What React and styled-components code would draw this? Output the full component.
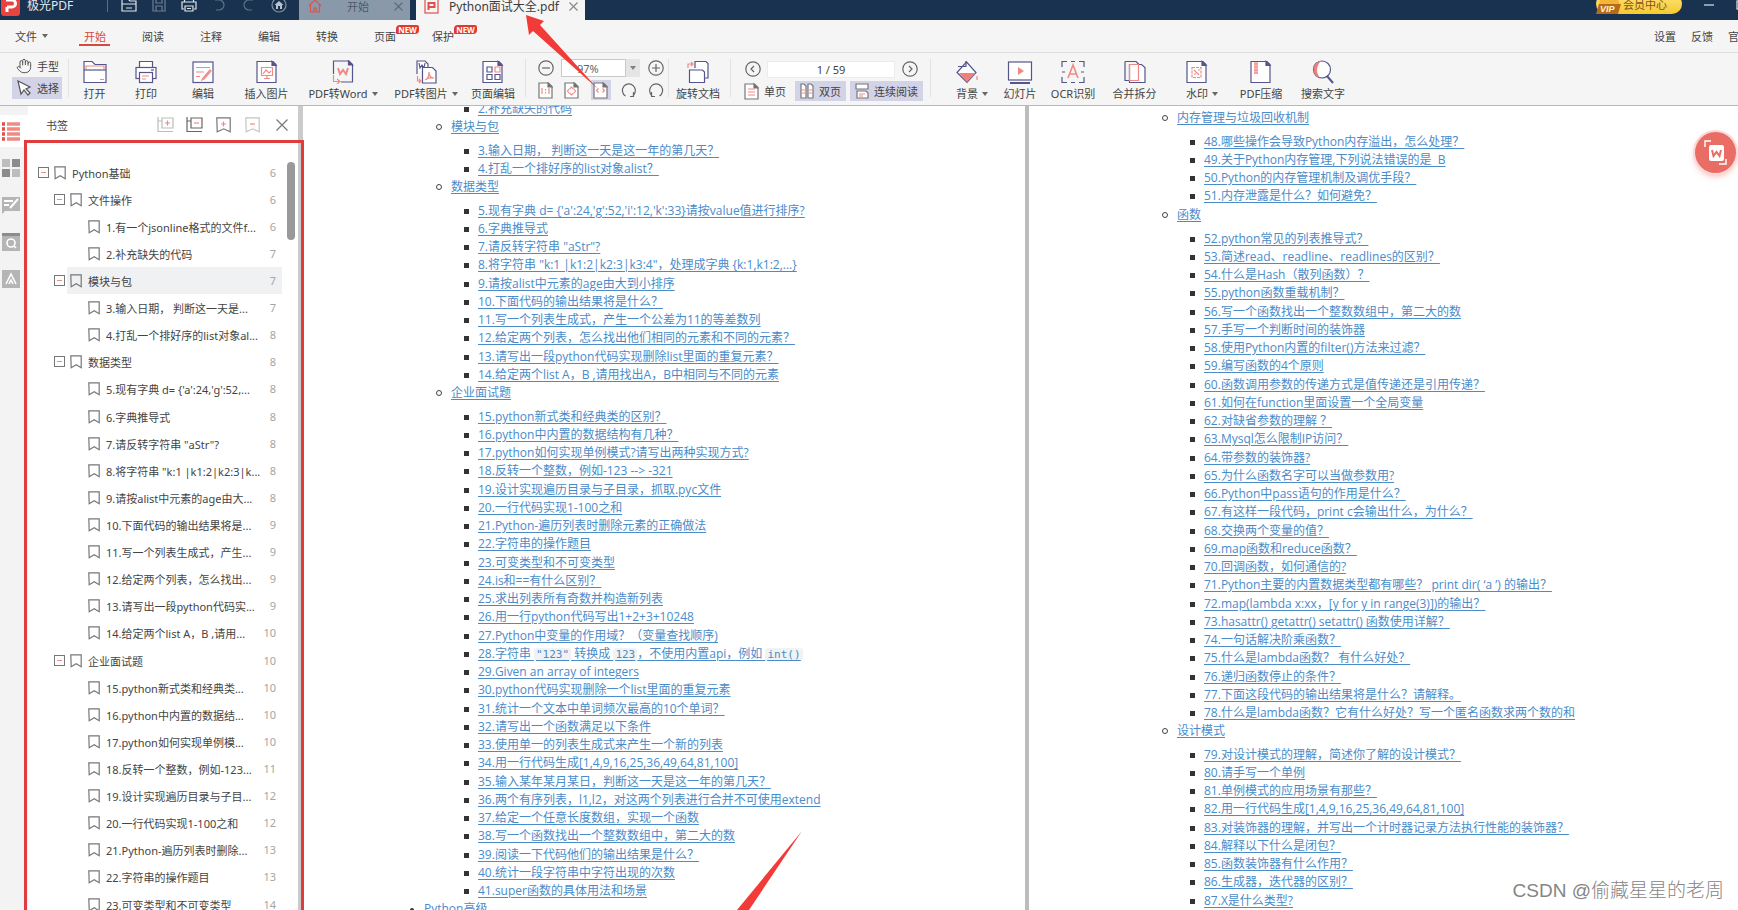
import { useState } from 'react';
import styled, { createGlobalStyle, css } from 'styled-components';
import { Hand } from 'lucide-react';

const UI_FONT = '"Noto Sans", "Noto Sans CJK SC", sans-serif';
const DOC_FONT = '"Open Sans", "Noto Sans CJK SC", sans-serif';

const colors = {
  navy: '#19324f',
  red: '#d9483f',
  pink: '#f08a85',
  indigo: '#55558c',
  bar: '#f5f5f5',
  active: '#d3d3e8',
  text: '#444444',
  gray: '#8a8a8a',
  link: '#4a8bc9',
  mark: '#f23b38'
};

const GlobalStyle = createGlobalStyle`
  *, *::before, *::after { box-sizing: border-box; }
  body { margin: 0; font-family: ${UI_FONT}; font-size: 11px; color: ${colors.text}; }
  button, input { font: inherit; color: inherit; margin: 0; padding: 0; }
  button { background: none; border: 0; cursor: pointer; white-space: nowrap; }
  ul { list-style: none; margin: 0; padding: 0; }
  svg { display: block; flex: none; }
`;

const Window = styled.div`
  position: relative;
  display: flex;
  flex-direction: column;
  height: 100vh;
  overflow: hidden;
  background: #fff;
`;

/* ---------- title bar ---------- */

const TitleBar = styled.header`
  display: flex;
  align-items: flex-end;
  flex: none;
  height: 20px;
  overflow: hidden;
  background: ${colors.navy};
`;

const Brand = styled.div`
  display: flex;
  align-items: center;
  gap: 7px;
  width: 107px;
  height: 30px;
  padding-left: 1px;
  font-size: 12px;
  color: #e4e9ef;
`;

const QuickBar = styled.div`
  display: flex;
  align-items: center;
  gap: 14px;
  width: 191px;
  height: 30px;
  padding-left: 13px;
`;

const QuickRule = styled.span`
  width: 1px;
  height: 30px;
  border-bottom: 8px solid ${colors.navy};
  background: #5d6f85;
`;

const DocTab = styled.div`
  display: flex;
  align-items: center;
  justify-content: space-between;
  height: 28px;
  width: ${p => (p.$active ? 169 : 111)}px;
  margin-right: 6px;
  padding: 0 7px 0 ${p => (p.$active ? 8 : 9)}px;
  background: ${p => (p.$active ? colors.bar : '#8a99aa')};
  color: ${p => (p.$active ? '#3c3c3c' : '#4d5a69')};
  font-size: ${p => (p.$active ? 12 : 11)}px;
`;

const WindowTools = styled.div`
  display: flex;
  align-items: center;
  height: 30px;
  margin-left: auto;
  margin-right: -8px;
  gap: 22px;
`;

const VipButton = styled.button`
  display: flex;
  align-items: center;
  gap: 2px;
  width: 86px;
  height: 20px;
  margin-bottom: 2px;
  border-radius: 10px;
  background: linear-gradient(#ffe37a, #f6c92f);
  color: #83501a;
`;

/* ---------- menu ---------- */

const MenuBar = styled.nav`
  display: flex;
  align-items: stretch;
  flex: none;
  height: 33px;
  overflow: hidden;
  background: ${colors.bar};
  border-bottom: 1px solid #dedede;
`;

const FileMenu = styled.button`
  display: flex;
  align-items: center;
  gap: 5px;
  width: 66px;
  padding-left: 15px;
`;

const MenuTab = styled.button`
  position: relative;
  display: flex;
  align-items: center;
  justify-content: center;
  width: 58px;
  color: ${p => (p.$active ? colors.red : colors.text)};

  ${p => p.$active && css`
    &::after {
      content: '';
      position: absolute;
      left: 13px;
      right: 14px;
      bottom: 6px;
      height: 2px;
      background: ${colors.red};
    }
  `}
`;

const NewTag = styled.span`
  position: absolute;
  left: 40px;
  top: 5px;
  width: 23px;
  border-radius: 4px 2px 4px 1px;
  background: #e03a2e;
  color: #fff;
  font-size: 8px;
  font-weight: 700;
  line-height: 9px;
  text-align: center;
`;

const MenuRight = styled.div`
  display: flex;
  gap: 15px;
  margin-left: auto;
  margin-right: -12px;
`;

/* ---------- ribbon ---------- */

const Ribbon = styled.div`
  display: flex;
  flex: none;
  height: 53px;
  padding-left: 12px;
  background: ${colors.bar};
  border-bottom: 1px solid #b9b9b9;
`;

const Divider = styled.span`
  flex: none;
  width: 1px;
  height: 38px;
  margin: 6px ${p => p.$after || 0}px 0 ${p => p.$before || 0}px;
  background: #e2e2e2;
`;

const Stack = styled.div`
  display: flex;
  flex-direction: column;
  flex: none;
  gap: ${p => p.$gap || 0}px;
  width: ${p => p.$w}px;
  padding-top: ${p => p.$top || 0}px;
`;

const Line = styled.div`
  display: flex;
  align-items: center;
  justify-content: ${p => p.$justify || 'flex-start'};
  gap: ${p => p.$gap || 0}px;
  height: 18px;
  padding-left: ${p => p.$left || 0}px;
`;

const ModeButton = styled.button`
  display: flex;
  align-items: center;
  gap: 5px;
  height: ${p => p.$h || 22}px;
  padding: 0 ${p => p.$pad || 4}px;
  background: ${p => (p.$active ? colors.active : 'transparent')};
`;

const BigButton = styled.button`
  display: flex;
  flex-direction: column;
  align-items: center;
  flex: none;
  gap: 3px;
  width: ${p => p.$w}px;
  padding-top: 7px;
`;

const BigLabel = styled.span`
  display: flex;
  align-items: center;
  gap: 4px;
  line-height: 14px;
  margin-right: ${p => (p.$hang ? -10 : 0)}px;
`;

const Caret = styled.i`
  border: 3px solid transparent;
  border-top: 4px solid #666;
  border-bottom: 0;
`;

const IconButton = styled.button`
  display: flex;
  align-items: center;
  justify-content: center;
  width: ${p => (p.$active ? 20 : 15)}px;
  height: ${p => (p.$active ? 20 : 18)}px;
  background: ${p => (p.$active ? colors.active : 'transparent')};
`;

const ZoomInput = styled.input`
  width: 65px;
  height: 18px;
  padding-left: 15px;
  border: 1px solid #c9c9c9;
  background: #fff;
  color: #666;
`;

const ZoomDrop = styled.button`
  display: flex;
  align-items: center;
  justify-content: center;
  width: 14px;
  height: 18px;
  margin-right: 8px;
  background: #e2e2e2;
  opacity: .8;
`;

const PageInput = styled.input`
  width: 128px;
  height: 17px;
  border: 1px solid #ececec;
  background: #fff;
  text-align: center;
`;

/* ---------- body ---------- */

const Body = styled.div`
  display: flex;
  flex: 1;
  min-height: 0;
`;

const Rail = styled.div`
  display: flex;
  flex-direction: column;
  flex: none;
  gap: 5px;
  width: 28px;
  padding-top: 9px;
  background: #f3f3f3;
`;

const RailButton = styled.button`
  display: flex;
  align-items: center;
  height: 32px;
  padding-left: 1px;
  background: ${p => (p.$active ? '#fff' : 'transparent')};
`;

const Panel = styled.aside`
  display: flex;
  flex-direction: column;
  flex: none;
  width: 275px;
  border-right: 5px solid #cbcbcb;
  overflow: hidden;
`;

const PanelHead = styled.div`
  display: flex;
  align-items: center;
  flex: none;
  gap: 14px;
  height: 38px;
  padding: 0 9px 0 18px;

  & h2 {
    flex: 1;
    margin: 0;
    font-size: 11px;
    font-weight: 400;
  }
`;

const Tree = styled.ul`
  position: relative;
  flex: none;
  padding: 15px 16px 0 10px;
`;

const Scrollbar = styled.div`
  position: absolute;
  top: 18px;
  right: 3px;
  width: 8px;
  height: 78px;
  border-radius: 4px;
  background: #999;
`;

const Node = styled.li`
  display: flex;
  align-items: center;
  height: 27px;
  padding-left: ${p => [0, 16, 50][p.$level]}px;
  white-space: nowrap;
  ${p => p.$selected && css`background: linear-gradient(90deg, transparent 29px, #eff1f3 29px);`}

  &:nth-child(9n) {
    margin-bottom: 1px;
  }

  & span {
    flex: 1;
    padding-left: 6px;
  }

  & em {
    font-style: normal;
    color: #a5a5a5;
    padding-right: 6px;
  }
`;

const Toggle = styled.button`
  position: relative;
  width: 11px;
  height: 11px;
  margin-right: 5px;
  border: 1px solid #777;

  &::after {
    content: '';
    position: absolute;
    left: 2px;
    right: 2px;
    top: 4px;
    height: 1px;
    background: ${colors.pink};
  }
`;

const Viewer = styled.main`
  flex: 1;
  min-width: 0;
  overflow: hidden;
`;

/* the spread is a little wider than the viewport */
const Spread = styled.div`
  display: grid;
  grid-template-columns: minmax(0, 1fr) 4px minmax(0, 1fr);
  width: calc(100% + 13px);
  height: 100%;
`;

const Gutter = styled.div`
  background: #bcbcbc;
`;

const Page = styled.article`
  overflow: hidden;
  font-family: ${DOC_FONT};
  font-size: 12px;
  line-height: 18px;
  white-space: nowrap;

  & > ul {
    margin-top: ${p => p.$shift}px;
  }

  & a {
    color: ${colors.link};
    text-decoration: underline;
    text-underline-offset: 2px;
  }
`;

const Chapter = styled.li`
  height: 18px;
  padding-left: 121px;

  &::before {
    content: '';
    float: left;
    width: 4px;
    height: 4px;
    margin: 8px 0 0 -14px;
    border-radius: 50%;
    background: #333;
  }
`;

const Topic = styled.li`
  padding-left: 148px;

  &::before {
    content: '';
    float: left;
    width: 6px;
    height: 6px;
    margin: 6px 0 0 -15px;
    border: 1px solid #444;
    border-radius: 50%;
  }
`;

const PlainTopic = styled.li`
  &::before {
    display: none;
  }
`;

const Questions = styled.ul`
  padding-top: ${p => (p.$cut ? 0 : 6)}px;
`;

const Question = styled.li`
  height: 18px;
  padding-left: 27px;

  &::before {
    content: '';
    float: left;
    width: 5px;
    height: 5px;
    margin: 7px 0 0 -14px;
    background: #333;
  }

  &:nth-child(4n) {
    margin-bottom: 1px;
  }

  & code {
    padding: 0 2px;
    border-radius: 3px;
    background: #f1f2f3;
    font-family: "DejaVu Sans Mono", monospace;
    font-size: 11px;
    text-decoration: underline;
  }
`;

const FloatButton = styled.button`
  position: absolute;
  top: 132px;
  right: 2px;
  display: flex;
  align-items: center;
  justify-content: center;
  width: 41px;
  height: 41px;
  border-radius: 50%;
  background: #e96d65;
  box-shadow: 0 0 0 2px #f9d8d5, 0 3px 6px rgb(233 109 101 / 50%);
`;

const Watermark = styled.div`
  position: absolute;
  right: 14px;
  bottom: 5px;
  font-family: "Liberation Sans", "Noto Sans CJK SC", sans-serif;
  font-size: 19px;
  font-weight: 300;
  line-height: 28px;
  color: #858585;
`;

const RedFrame = styled.div`
  position: absolute;
  left: 24px;
  top: 140px;
  width: 280px;
  bottom: -10px;
  border: 3px solid #e03c3e;
  pointer-events: none;
`;

const Marks = styled.svg`
  position: absolute;
  left: ${p => p.$left}px;
  top: ${p => p.$top}px;
  pointer-events: none;
`;

/* ---------- icons ---------- */

const Ico = ({ w = 22, h = 24, c = colors.indigo, children }) => (
  <svg width={w} height={h} viewBox={`0 0 ${w} ${h}`} fill="none" stroke={c} strokeWidth="1.2">{children}</svg>
);

const Sheet = ({ x = 1 }) => (
  <>
    <path d={`M${x} 1.5h16l3 3v18h-19z`} fill="#fff" />
    <path d={`M${x + 15} 1.5v4h4z`} fill={colors.indigo} />
  </>
);

const pink = { stroke: colors.pink, fill: 'none' };

const icons = {
  open: <Ico w={24}><path d="M1 22.500V1.500h8l3 3h11v18z" fill="#fff" /><path d="M1 10h22" /><path d="M3 9V6h18v3M17 19.500h4" {...pink} /></Ico>,
  print: <Ico><path d="M4.500 8V1.500h13V8" fill="#fff" /><rect x="1" y="7.500" width="20" height="11" fill="#fff" /><rect x="4.500" y="12.500" width="13" height="10" fill="#fff" /><path d="M7 16h7M7 19h4" {...pink} /><path d="M16 10h3" /></Ico>,
  edit: <Ico><rect x="1" y="2" width="20" height="20.500" fill="#fff" /><path d="M4 7.500h14M4 12h8M4 16.500h4M18 10l-7 8-1 2 2-1 7-8z" {...pink} /></Ico>,
  image: <Ico><Sheet /><path d="M5.500 7.500h11v8h-11zM7 14l3-4 3 3 2-2M11 15.500v3M8 18.500h6" {...pink} /></Ico>,
  word: <Ico><path d="M1.500 14V1H17l3.500 3.500V22H9" fill="none" /><path d="M16.500 1v4h4z" fill={colors.indigo} /><path d="M6 8l2 6 3-4 3 4 2-6" stroke={colors.pink} strokeWidth="2" /><path d="M1.500 15v6.500h6M5 19l3 2.500-3 2.500" {...pink} /></Ico>,
  toImage: <Ico><path d="M2 14V1h8l3 3v3" fill="#fff" /><path d="M4 3l1 5 2-3 2 3 1-5" /><path d="M7.500 7.500h10l3.500 3.500v12H7.500z" fill="#fff" /><path d="M10 20c3-1 4-5 4-8 0 4 2 6 5 6-4-1-6 0-9 2z" {...pink} /><path d="M2.500 16v5h3M4 19l2 2-2 2" {...pink} /></Ico>,
  pages: <Ico><Sheet /><path d="M5 7h5v5H5zM5 14.500h5v5H5zM13 14.500h5v5h-5z" /><path d="M13 7h5v5h-5z" {...pink} /></Ico>,
  rotateDoc: <Ico w={24}><path d="M9 8V1.500h11l2 2V18h-4" fill="#fff" /><path d="M3.500 10h13l2 2v10.500h-15z" fill="#fff" /><path d="M2 8V4h5M5 2l2 2-2 2" {...pink} /></Ico>,
  bucket: <Ico w={24}><path d="M11.500 2L2 12.500 12 22.500 21 12.500z" fill="#fff" /><path d="M4 13h16.500l-8.500 9z" fill="#f2807a" stroke="none" /><path d="M3 6.500h8V1" /><path d="M22 16v4" {...pink} /></Ico>,
  slides: <Ico w={26}><rect x="1.500" y="2" width="23" height="18" fill="#fff" /><path d="M3 23h20" strokeWidth="2" /><path d="M11 7v8l6-4z" fill={colors.pink} stroke="none" /></Ico>,
  ocr: <Ico w={24}><path d="M1 7V1.500h5M18 1.500h5V7M23 17v5.500h-5M6 22.500H1V17M1 12h3M20 12h3M10 1.500h4M10 22.500h4" /><path d="M7 18l5-13 5 13M9 14h6" stroke={colors.pink} strokeWidth="1.600" /></Ico>,
  merge: <Ico><path d="M1 1.500h11l3 3M1 1.500v19h4" /><path d="M5.500 4.500h12l3.500 3v15H5.500z" fill="#fff" /><path d="M5.500 4.500h9v16h-9z" {...pink} /></Ico>,
  watermark: <Ico><Sheet /><rect x="6" y="7.500" width="9" height="10" strokeDasharray="3 1" {...pink} /><path d="M8 10l5 5M8 14h2M12 10h2" {...pink} /></Ico>,
  zip: <Ico><Sheet /><path d="M5 2v12M7 2v12M4 4h4M4 7h4M4 10h4M4 13h4" {...pink} /></Ico>,
  search: <Ico w={24}><circle cx="11" cy="9.500" r="8.500" fill="#fff" /><path d="M10 1c-9 1-10 14-1 17-4-5-4-12 1-17z" fill="#f2807a" stroke="none" /><path d="M16 16l6 7" strokeWidth="2" /></Ico>
};

const fileTools = [
  { key: 'open', w: 51, label: '打开' },
  { key: 'print', w: 52, label: '打印' },
  { key: 'edit', w: 62, label: '编辑' },
  { key: 'image', w: 65, label: '插入图片' },
  { key: 'word', w: 88, label: 'PDF转Word', caret: true },
  { key: 'toImage', w: 78, label: 'PDF转图片', caret: true },
  { key: 'pages', w: 56, label: '页面编辑' }
];

const docTools = [
  { key: 'bucket', w: 50, label: '背景', caret: true, hang: true },
  { key: 'slides', w: 56, label: '幻灯片' },
  { key: 'ocr', w: 50, label: 'OCR识别' },
  { key: 'merge', w: 73, label: '合并拆分' },
  { key: 'watermark', w: 52, label: '水印', caret: true, hang: true },
  { key: 'zip', w: 76, label: 'PDF压缩' },
  { key: 'search', w: 48, label: '搜索文字' }
];

const menuTabs = [
  { label: '开始' }, { label: '阅读' }, { label: '注释' }, { label: '编辑' },
  { label: '转换' }, { label: '页面', isNew: true }, { label: '保护', isNew: true }
];

const Tool = ({ tool }) => (
  <BigButton $w={tool.w}>
    {icons[tool.key]}
    <BigLabel $hang={tool.hang}>{tool.label}{tool.caret && <Caret />}</BigLabel>
  </BigButton>
);

const Round = ({ d, label }) => (
  <IconButton aria-label={label}>
    <Ico w={16} h={16} c="#666"><circle cx="8" cy="8" r="7.200" /><path d={d} /></Ico>
  </IconButton>
);

const MiniPage = ({ children }) => (
  <Ico w={15} h={17} c="#777"><path d="M1 1h9.500L14 4.500V16H1z" fill="#fff" /><path d="M10 1v4h4z" fill="#666" />{children}</Ico>
);

const Bookmark = ({ w = 12, h = 14, c = '#777', sign }) => (
  <Ico w={w} h={h} c={c}>
    <path d={`M.8 .8h${w - 1.6}v${h - 2}l${1 - w / 2}-3-${w / 2 - 1} 3z`} fill="none" />
    {sign && <path d={sign} {...pink} />}
  </Ico>
);

const Close = ({ s = 9, c = '#777' }) => (
  <Ico w={s} h={s} c={c}><path d={`M.5 .5L${s - 0.5} ${s - 0.5}M${s - 0.5} .5L.5 ${s - 0.5}`} /></Ico>
);

/* ---------- content ---------- */

const outline = [
  [0, 'Python基础', 6],
  [1, '文件操作', 6],
  [2, '1.有一个jsonline格式的文件f...', 6],
  [2, '2.补充缺失的代码', 7],
  [1, '模块与包', 7],
  [2, '3.输入日期， 判断这一天是...', 7],
  [2, '4.打乱一个排好序的list对象al...', 8],
  [1, '数据类型', 8],
  [2, "5.现有字典 d= {'a':24,'g':52,...", 8],
  [2, '6.字典推导式', 8],
  [2, '7.请反转字符串 "aStr"?', 8],
  [2, '8.将字符串 "k:1 |k1:2|k2:3|k...', 8],
  [2, '9.请按alist中元素的age由大...', 8],
  [2, '10.下面代码的输出结果将是...', 9],
  [2, '11.写一个列表生成式，产生...', 9],
  [2, '12.给定两个列表，怎么找出...', 9],
  [2, '13.请写出一段python代码实...', 9],
  [2, '14.给定两个list A，B ,请用...', 10],
  [1, '企业面试题', 10],
  [2, '15.python新式类和经典类...', 10],
  [2, '16.python中内置的数据结...', 10],
  [2, '17.python如何实现单例模...', 10],
  [2, '18.反转一个整数，例如-123...', 11],
  [2, '19.设计实现遍历目录与子目...', 12],
  [2, '20.一行代码实现1-100之和', 12],
  [2, '21.Python-遍历列表时删除...', 13],
  [2, '22.字符串的操作题目', 13],
  [2, '23.可变类型和不可变类型', 14]
];

const leftPage = [
  { items: ['2.补充缺失的代码'] },
  { title: '模块与包', items: ['3.输入日期， 判断这一天是这一年的第几天？', '4.打乱一个排好序的list对象alist？'] },
  {
    title: '数据类型',
    items: [
      "5.现有字典 d= {'a':24,'g':52,'i':12,'k':33}请按value值进行排序?",
      '6.字典推导式',
      '7.请反转字符串 "aStr"?',
      '8.将字符串 "k:1 |k1:2|k2:3|k3:4"，处理成字典 {k:1,k1:2,...}',
      '9.请按alist中元素的age由大到小排序',
      '10.下面代码的输出结果将是什么？',
      '11.写一个列表生成式，产生一个公差为11的等差数列',
      '12.给定两个列表，怎么找出他们相同的元素和不同的元素？',
      '13.请写出一段python代码实现删除list里面的重复元素？',
      '14.给定两个list A，B ,请用找出A，B中相同与不同的元素'
    ]
  },
  {
    title: '企业面试题',
    items: [
      '15.python新式类和经典类的区别？',
      '16.python中内置的数据结构有几种？',
      '17.python如何实现单例模式?请写出两种实现方式?',
      '18.反转一个整数，例如-123 --> -321',
      '19.设计实现遍历目录与子目录，抓取.pyc文件',
      '20.一行代码实现1-100之和',
      '21.Python-遍历列表时删除元素的正确做法',
      '22.字符串的操作题目',
      '23.可变类型和不可变类型',
      '24.is和==有什么区别？',
      '25.求出列表所有奇数并构造新列表',
      '26.用一行python代码写出1+2+3+10248',
      '27.Python中变量的作用域？（变量查找顺序)',
      '28.字符串 `"123"` 转换成 `123`，不使用内置api，例如 `int()`',
      '29.Given an array of integers',
      '30.python代码实现删除一个list里面的重复元素',
      '31.统计一个文本中单词频次最高的10个单词？',
      '32.请写出一个函数满足以下条件',
      '33.使用单一的列表生成式来产生一个新的列表',
      '34.用一行代码生成[1,4,9,16,25,36,49,64,81,100]',
      '35.输入某年某月某日，判断这一天是这一年的第几天？',
      '36.两个有序列表，l1,l2，对这两个列表进行合并不可使用extend',
      '37.给定一个任意长度数组，实现一个函数',
      '38.写一个函数找出一个整数数组中，第二大的数',
      '39.阅读一下代码他们的输出结果是什么？',
      '40.统计一段字符串中字符出现的次数',
      '41.super函数的具体用法和场景'
    ]
  }
];

const rightPage = [
  {
    title: '内存管理与垃圾回收机制',
    items: [
      '48.哪些操作会导致Python内存溢出，怎么处理？',
      '49.关于Python内存管理,下列说法错误的是\u00a0 B',
      '50.Python的内存管理机制及调优手段？',
      '51.内存泄露是什么？如何避免？'
    ]
  },
  {
    title: '函数',
    items: [
      '52.python常见的列表推导式？',
      '53.简述read、readline、readlines的区别？',
      '54.什么是Hash（散列函数）？',
      '55.python函数重载机制？',
      '56.写一个函数找出一个整数数组中，第二大的数',
      '57.手写一个判断时间的装饰器',
      '58.使用Python内置的filter()方法来过滤？',
      '59.编写函数的4个原则',
      '60.函数调用参数的传递方式是值传递还是引用传递？',
      '61.如何在function里面设置一个全局变量',
      '62.对缺省参数的理解 ？',
      '63.Mysql怎么限制IP访问？',
      '64.带参数的装饰器?',
      '65.为什么函数名字可以当做参数用?',
      '66.Python中pass语句的作用是什么？',
      '67.有这样一段代码，print c会输出什么，为什么？',
      '68.交换两个变量的值？',
      '69.map函数和reduce函数？',
      '70.回调函数，如何通信的?',
      '71.Python主要的内置数据类型都有哪些？ print dir( ‘a ’) 的输出？',
      '72.map(lambda x:xx，[y for y in range(3)])的输出？',
      '73.hasattr() getattr() setattr() 函数使用详解？',
      '74.一句话解决阶乘函数？',
      '75.什么是lambda函数？ 有什么好处？',
      '76.递归函数停止的条件？',
      '77.下面这段代码的输出结果将是什么？请解释。',
      '78.什么是lambda函数？它有什么好处？写一个匿名函数求两个数的和'
    ]
  },
  {
    title: '设计模式',
    items: [
      '79.对设计模式的理解，简述你了解的设计模式？',
      '80.请手写一个单例',
      '81.单例模式的应用场景有那些？',
      '82.用一行代码生成[1,4,9,16,25,36,49,64,81,100]',
      '83.对装饰器的理解，并写出一个计时器记录方法执行性能的装饰器？',
      '84.解释以下什么是闭包？',
      '85.函数装饰器有什么作用？',
      '86.生成器，迭代器的区别？',
      '87.X是什么类型?'
    ]
  }
];

// `x` marks inline code
const renderInline = text => text.split('`').map((part, i) => (i % 2 ? <code key={i}>{part}</code> : part));

const Sections = ({ data }) => data.map((section, i) => (
  <Topic key={i} as={section.title ? 'li' : PlainTopic}>
    {section.title && <a href="#topic">{section.title}</a>}
    <Questions $cut={!section.title}>
      {section.items.map(q => <Question key={q}><a href="#question">{renderInline(q)}</a></Question>)}
    </Questions>
  </Topic>
));

const TitleArea = () => (
  <TitleBar>
    <Brand>
      <svg width="19" height="21" viewBox="0 0 19 21">
        <rect width="19" height="21" rx="3" fill="#e8443f" />
        <path d="M6 17V12M6 12h5a3.500 3.500 0 0 0 0-7H5" fill="none" stroke="#fff" strokeWidth="3" />
      </svg>
      极光PDF
    </Brand>
    <QuickRule />
    <QuickBar>
      <Ico w={16} h={14} c="#dfe5ec"><path d="M1 13V1h6l2 2h6v10zM1 6h14M5 10h6" /></Ico>
      <Ico w={16} h={14} c="#6d7f93"><path d="M2 1h12v12H2zM5 1v4h6V1M5 13V8h6v5" /></Ico>
      <Ico w={16} h={14} c="#dfe5ec"><path d="M3.500 4V1h9v3M3 11H1V4h14v7h-2M4 8h8v5H4zM6 10.500h4" /></Ico>
      <Ico w={16} h={14} c="#5f7288"><path d="M4 2h4a5 5 0 0 1 0 10H5" /></Ico>
      <Ico w={16} h={14} c="#5f7288"><path d="M12 2H8a5 5 0 0 0 0 10h3" /></Ico>
      <Ico w={16} h={16} c="#8493a5"><circle cx="8" cy="8" r="7" /><path d="M3.500 8L8 4l4.500 4H11v4H9V9H7v3H5V8z" fill="#b9c3ce" stroke="none" /></Ico>
    </QuickBar>
    <DocTab>
      <Ico w={14} h={14} c="#e0514c"><path d="M.8 7L7 1l6.200 6M2.500 6v7H6V9h2v4h3.500V6" /></Ico>
      开始
      <Close c="#5f6b79" />
    </DocTab>
    <DocTab $active>
      <Ico w={15} h={16} c="#e0514c"><rect x="1" y="1" width="13" height="14" /><path d="M4.500 12V5h6v4h-6" strokeWidth="2" /></Ico>
      Python面试大全.pdf
      <Close c="#8a8a8a" />
    </DocTab>
    <WindowTools>
      <VipButton>
        <svg width="25" height="22" viewBox="0 0 25 22">
          <path d="M3 12L5 1h15l4 11z" fill="#f2b53a" />
          <path d="M3 11h22l-3 10H0z" fill="#b86a1c" />
          <text x="4" y="19" fontSize="9" fontWeight="700" fontStyle="italic" fill="#fff6d6" fontFamily="Liberation Sans">VIP</text>
        </svg>
        会员中心
      </VipButton>
      <Ico w={10} h={10} c="#dfe5ec"><path d="M0 5h10" /></Ico>
      <Ico w={10} h={10} c="#dfe5ec"><rect x="1" y="1" width="8" height="8" /></Ico>
    </WindowTools>
  </TitleBar>
);

const RibbonArea = () => {
  const [zoom, setZoom] = useState('97%');
  const [page, setPage] = useState('1 / 59');

  return (
    <Ribbon>
      <Stack $w={50} $top={2}>
        <ModeButton><Hand size={16} color="#555" strokeWidth={1.5} />手型</ModeButton>
        <ModeButton $active>
          <Ico w={16} h={16} c="#555"><path d="M2 1l3 13 3-4 4 5 2-2-4-4 4-2z" fill="#fff" /></Ico>选择
        </ModeButton>
      </Stack>
      <Divider $before={6} />
      {fileTools.map(t => <Tool key={t.key} tool={t} />)}
      <Divider $before={4} $after={12} />
      <Stack $w={125} $top={6} $gap={4}>
        <Line>
          <Round label="缩小" d="M4 8h8" />
          <Line $left={8}>
            <ZoomInput aria-label="缩放" value={zoom} onChange={e => setZoom(e.target.value)} />
            <ZoomDrop aria-label="缩放比例"><Caret /></ZoomDrop>
          </Line>
          <Round label="放大" d="M4 8h8M8 4v8" />
        </Line>
        <Line $justify="space-between">
          <IconButton aria-label="实际大小"><MiniPage><path d="M4 6v6M11 6v6M7.500 7v1.500M7.500 10v1.500" {...pink} /></MiniPage></IconButton>
          <IconButton aria-label="适合页面"><MiniPage><path d="M5.500 7l2-2 2 2M5.500 11l2 2 2-2M5 7L3.500 9 5 11M10 7l1.500 2-1.500 2" {...pink} /></MiniPage></IconButton>
          <IconButton aria-label="适合宽度" $active><MiniPage><path d="M5.500 6.500l-2 2 2 2M9.500 6.500l2 2-2 2" {...pink} /></MiniPage></IconButton>
          <IconButton aria-label="顺时针旋转"><Ico w={16} h={16} c="#666"><path d="M4.500 14A6.500 6.500 0 1 1 12 13.500" /><path d="M12.500 10v4.500H9" /></Ico></IconButton>
          <IconButton aria-label="逆时针旋转"><Ico w={16} h={16} c="#666"><path d="M11.500 14A6.500 6.500 0 1 0 4 13.500" /><path d="M3.500 10v4.500H7" /></Ico></IconButton>
        </Line>
      </Stack>
      <Divider $before={5} />
      <Tool tool={{ key: 'rotateDoc', w: 58, label: '旋转文档' }} />
      <Divider $before={3} $after={8} />
      <Stack $w={184} $top={7} $gap={4}>
        <Line $gap={7} $left={6}>
          <Round label="上一页" d="M9 5L6 8l3 3" />
          <PageInput aria-label="页码" value={page} onChange={e => setPage(e.target.value)} />
          <Round label="下一页" d="M7 5l3 3-3 3" />
        </Line>
        <Line $gap={4}>
          <ModeButton $pad={5} $h={20}><MiniPage><path d="M4 6h7M4 9h7M4 12h7" {...pink} /></MiniPage>单页</ModeButton>
          <ModeButton $pad={5} $h={20} $active>
            <Ico w={14} h={16} c="#777"><path d="M1 1h3l2 2v12H1zM8 1h3l2 2v12H8z" fill="#fff" /><path d="M2 7h3M2 10h3M9 7h3M9 10h3" {...pink} /></Ico>双页
          </ModeButton>
          <ModeButton $pad={5} $h={20} $active>
            <Ico w={14} h={16} c="#777"><path d="M1 6V1h12v5zM2 15V8h9l2 2v5z" fill="#fff" /><path d="M4 11h6M4 13h4" {...pink} /></Ico>连续阅读
          </ModeButton>
        </Line>
      </Stack>
      <Divider $before={7} $after={11} />
      {docTools.map(t => <Tool key={t.key} tool={t} />)}
    </Ribbon>
  );
};

const RailArea = () => (
  <Rail>
    <RailButton $active aria-label="书签">
      <Ico w={20} h={20} c="#f08a85"><path d="M6 3h13M6 8h13M6 13h13M6 18h13" strokeWidth="3.500" /><path d="M1 3h3M1 8h3M1 13h3M1 18h3" stroke="#e0514c" strokeWidth="3.500" /></Ico>
    </RailButton>
    <RailButton aria-label="缩略图">
      <svg width="20" height="20"><path d="M1 1h8v8H1zM11 11h8v8h-8z" fill="#bdbdbd" /><path d="M11 1h8v8h-8zM1 11h8v8H1z" fill="#8c8c8c" /></svg>
    </RailButton>
    <RailButton aria-label="注释">
      <Ico w={20} h={20} c="#fff"><path d="M1 2h18v14H4l-3 3z" fill="#b5b5b5" stroke="none" /><path d="M3 6h9M3 10h5M17 4l-8 9" strokeWidth="2" /></Ico>
    </RailButton>
    <RailButton aria-label="搜索">
      <Ico w={20} h={20} c="#fff"><path d="M1 1h18v18H1z" fill="#b5b5b5" stroke="none" /><path d="M1 1h18v3H1z" fill="#8c8c8c" stroke="none" /><circle cx="10" cy="11" r="4" strokeWidth="1.600" /><path d="M13 14l2 2" strokeWidth="1.600" /></Ico>
    </RailButton>
    <RailButton aria-label="文字">
      <Ico w={20} h={20} c="#fff"><path d="M1 1h18v18H1z" fill="#b5b5b5" stroke="none" /><path d="M5 15l5-10 5 10M8 15l2-4 2 4" strokeWidth="1.600" /></Ico>
    </RailButton>
  </Rail>
);

const BookmarkPanel = () => (
  <Panel>
    <PanelHead>
      <h2>书签</h2>
      <IconButton aria-label="展开"><Ico w={17} h={16} c="#bdbdbd"><path d="M1 0v14.500h15M1 4h4M5 1h11v10H5z" /><path d="M8 6h5M10.500 3.500v5" {...pink} /></Ico></IconButton>
      <IconButton aria-label="折叠"><Ico w={17} h={16} c="#666"><path d="M1 0v14.500h15M1 4h4M5 1h11v10H5z" /><path d="M8 6h5" {...pink} /></Ico></IconButton>
      <IconButton aria-label="添加书签"><Bookmark w={15} h={16} sign="M5 7h5M7.500 4.500v5" /></IconButton>
      <IconButton aria-label="删除书签"><Bookmark w={15} h={16} c="#c4c4c4" sign="M5 7h5" /></IconButton>
      <IconButton aria-label="关闭"><Close s={12} /></IconButton>
    </PanelHead>
    <Tree>
      {outline.map(([level, label, page]) => (
        <Node key={label} $level={level} $selected={label === '模块与包'}>
          {level < 2 && <Toggle aria-label="折叠" />}
          <Bookmark />
          <span>{label}</span>
          <em>{page}</em>
        </Node>
      ))}
      <Scrollbar />
    </Tree>
  </Panel>
);

const App = () => {
  const [tab, setTab] = useState('开始');

  return (
    <Window>
      <GlobalStyle />
      <TitleArea />
      <MenuBar>
        <FileMenu>文件<Caret /></FileMenu>
        {menuTabs.map(t => (
          <MenuTab key={t.label} $active={tab === t.label} onClick={() => setTab(t.label)}>
            {t.label}
            {t.isNew && <NewTag>NEW</NewTag>}
          </MenuTab>
        ))}
        <MenuRight>
          <button>设置</button>
          <button>反馈</button>
          <button>官网</button>
        </MenuRight>
      </MenuBar>
      <RibbonArea />
      <Body>
        <RailArea />
        <BookmarkPanel />
        <Viewer>
          <Spread>
            <Page $shift={-6}>
              <ul>
                <Sections data={leftPage} />
                <Chapter><a href="#chapter">Python高级</a></Chapter>
              </ul>
            </Page>
            <Gutter />
            <Page $shift={3}>
              <ul><Sections data={rightPage} /></ul>
            </Page>
          </Spread>
        </Viewer>
      </Body>

      <RedFrame />
      <Marks $left={520} $top={10} width="84" height="84" viewBox="0 0 84 84">
        <path d="M6 5l18 6-4 4 58 64-65-58-4 4z" fill={colors.mark} />
      </Marks>
      <Marks $left={730} $top={830} width="76" height="80" viewBox="0 0 76 80">
        <path d="M72 1L7 80h12z" fill={colors.mark} />
      </Marks>
      <FloatButton aria-label="转换为Word">
        <Ico w={25} h={27} c="#fff">
          <path d="M2 8V2h6M23 20v5h-7" strokeWidth="1.500" />
          <rect x="6" y="6" width="15" height="16" rx="2" fill="#fff" stroke="none" />
          <path d="M9 11l1.500 6 3-4 3 4 1.500-6" stroke="#e96d65" strokeWidth="2" />
        </Ico>
      </FloatButton>
      <Watermark>CSDN @偷藏星星的老周</Watermark>
    </Window>
  );
};

export default App;
